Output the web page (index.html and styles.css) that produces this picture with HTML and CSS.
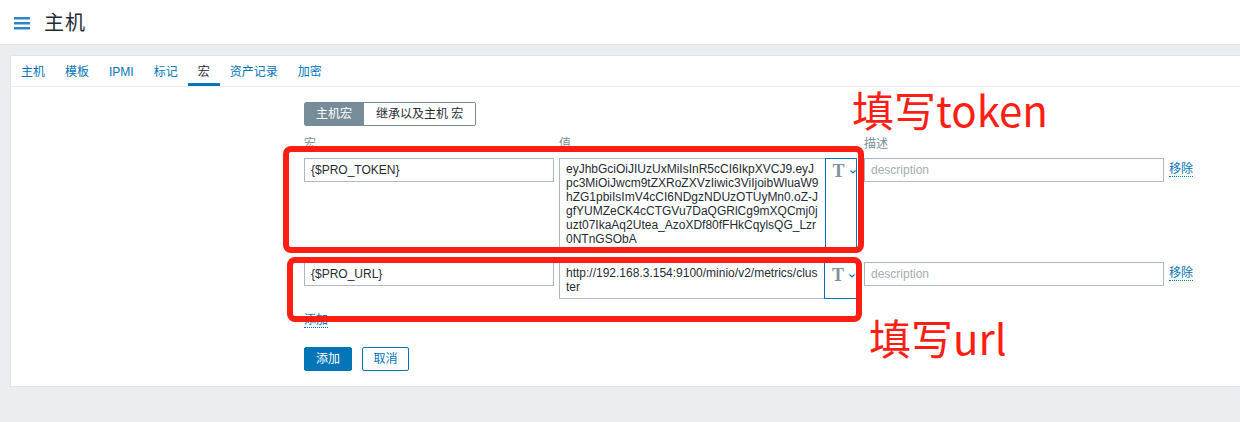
FILE: index.html
```html
<!DOCTYPE html>
<html lang="zh-CN">
<head>
<meta charset="utf-8">
<title>主机</title>
<link rel="stylesheet" href="styles.css">
</head>
<body>
<header class="page-header">
  <span class="menu-toggle" aria-label="菜单">
    <svg width="16" height="13" viewBox="0 0 16 13">
      <rect x="0" y="0" width="16" height="2.5" fill="#2d86c8"/>
      <rect x="0" y="5" width="16" height="2.5" fill="#2d86c8"/>
      <rect x="0" y="10" width="16" height="2.5" fill="#2d86c8"/>
    </svg>
  </span>
  <h1 class="page-title">主机</h1>
</header>

<main class="page">
  <section class="panel">
    <nav class="tabs">
      <a class="tab">主机</a>
      <a class="tab">模板</a>
      <a class="tab">IPMI</a>
      <a class="tab">标记</a>
      <a class="tab active">宏</a>
      <a class="tab">资产记录</a>
      <a class="tab">加密</a>
    </nav>

    <form class="macro-form">
      <div class="segmented">
        <span class="seg seg-on">主机宏</span><span class="seg">继承以及主机 宏</span>
      </div>

      <div class="macro-row head">
        <div class="col-label">宏</div>
        <div class="col-label">值</div>
        <div class="col-label">描述</div>
        <div></div>
      </div>

      <div class="macro-row">
        <div class="field macro-name">{$PRO_TOKEN}</div>
        <div class="value-group">
          <div class="value-text tall">
            <span>eyJhbGciOiJIUzUxMiIsInR5cCI6IkpXVCJ9.eyJ</span>
            <span>pc3MiOiJwcm9tZXRoZXVzIiwic3ViIjoibWluaW9</span>
            <span>hZG1pbiIsImV4cCI6NDgzNDUzOTUyMn0.oZ-J</span>
            <span>gfYUMZeCK4cCTGVu7DaQGRlCg9mXQCmj0j</span>
            <span>uzt07IkaAq2Utea_AzoXDf80fFHkCqylsQG_Lzr</span>
            <span>0NTnGSObA</span>
          </div>
          <span class="type-btn"><span class="type-t">T</span><svg class="chev" width="6" height="4" viewBox="0 0 6 4"><path d="M0.5 0.5 L3 3 L5.5 0.5" fill="none" stroke="#0275b8" stroke-width="1.1"/></svg></span>
        </div>
        <div class="field desc placeholder">description</div>
        <a class="remove">移除</a>
      </div>

      <div class="macro-row second">
        <div class="field macro-name">{$PRO_URL}</div>
        <div class="value-group">
          <div class="value-text short">
            <span>http://192.168.3.154:9100/minio/v2/metrics/clus</span>
            <span>ter</span>
          </div>
          <span class="type-btn"><span class="type-t">T</span><svg class="chev" width="6" height="4" viewBox="0 0 6 4"><path d="M0.5 0.5 L3 3 L5.5 0.5" fill="none" stroke="#0275b8" stroke-width="1.1"/></svg></span>
        </div>
        <div class="field desc placeholder">description</div>
        <a class="remove">移除</a>
      </div>

      <div class="add-row"><a class="link-add">添加</a></div>

      <div class="actions">
        <span class="btn btn-primary">添加</span>
        <span class="btn btn-alt">取消</span>
      </div>
    </form>
  </section>

  <!-- hand-drawn callouts over the form -->
  <div class="callout-box box-token"></div>
  <div class="callout-box box-url"></div>
  <div class="callout-note note-token">填写token</div>
  <div class="callout-note note-url">填写url</div>
</main>
</body>
</html>
```

FILE: styles.css
```css
* {
  box-sizing: border-box;
}

html, body {
  margin: 0;
  padding: 0;
}

body {
  width: 1240px;
  height: 422px;
  overflow: hidden;
  background: #ebeef0;
  font-family: "Liberation Sans", "Noto Sans CJK SC", sans-serif;
  font-size: 12px;
  color: #1f2c33;
  position: relative;
}

/* top bar */
.page-header {
  height: 45px;
  background: #fff;
  border-bottom: 1px solid #dfe4e7;
  display: flex;
  align-items: center;
  padding-left: 14px;
}

.menu-toggle {
  display: flex;
  width: 16px;
  height: 13px;
  margin-top: 2px;
}

.page-title {
  margin: 0 0 0 14px;
  font-family: "Noto Sans CJK SC", sans-serif;
  font-weight: normal;
  font-size: 20px;
  line-height: 24px;
  color: #1f2c33;
  letter-spacing: 1px;
}

/* content panel */
.page {
  padding-top: 10px;
}

.panel {
  margin-left: 10px;
  background: #fff;
  border: 1px solid #dfe4e7;
  border-right: none;
  padding-bottom: 15px;
}

.tabs {
  display: flex;
  height: 31px;
  border-bottom: 1px solid #ebeef0;
}

.tab {
  display: block;
  height: 30px;
  padding: 8px 10px 0;
  line-height: 16px;
  color: #0275b8;
  white-space: nowrap;
}

.tab.active {
  color: #1f2c33;
  border-bottom: 3px solid #0275b8;
}

/* macro form */
.macro-form {
  padding: 15px 0 0 293px;
}

.segmented {
  display: inline-flex;
  height: 24px;
  border: 1px solid #768d99;
  border-radius: 2px;
  overflow: hidden;
}

.seg {
  display: flex;
  align-items: center;
  padding: 0 12px;
  line-height: 22px;
  color: #1f2c33;
  background: #fff;
}

.seg-on {
  background: #768d99;
  color: #fff;
  padding: 0 12px 0 11px;
}

.macro-row {
  display: grid;
  grid-template-columns: 255px 305px 305px auto;
  align-items: start;
}

.macro-row.head {
  margin-top: 10px;
  margin-bottom: 6px;
}

.macro-row.second {
  margin-top: 12px;
}

.col-label {
  line-height: 16px;
  color: #768d99;
}

.field {
  height: 24px;
  border: 1px solid #acbbc2;
  padding: 0 6px;
  line-height: 22px;
  background: #fff;
  white-space: nowrap;
  overflow: hidden;
}

.macro-name {
  width: 250px;
}

.desc {
  width: 300px;
}

.placeholder {
  color: #a2adb3;
}

.value-group {
  display: flex;
  width: 298px;
}

.value-text {
  width: 266px;
  border: 1px solid #acbbc2;
  border-right: none;
  padding: 3px 6px 0;
  line-height: 14px;
  background: #fff;
}

.value-text span {
  display: block;
  white-space: nowrap;
}

.value-text.tall {
  height: 92px;
}

.value-text.short {
  height: 37px;
}

.type-btn {
  width: 33px;
  border: 1px solid #0275b8;
  display: flex;
  align-items: flex-start;
  padding: 3px 0 0 7px;
  background: #fff;
}

.type-t {
  font-family: "Liberation Serif", serif;
  font-weight: bold;
  font-size: 18px;
  line-height: 18px;
  color: #7d919c;
}

.chev {
  margin: 8px 0 0 5px;
}

.remove {
  margin-top: 4px;
  justify-self: start;
  line-height: 14px;
  color: #0275b8;
  border-bottom: 1px dotted #0275b8;
}

.add-row {
  margin-top: 14px;
  height: 16px;
}

.link-add {
  display: inline-block;
  line-height: 14px;
  color: #0275b8;
  border-bottom: 1px dotted #0275b8;
}

.actions {
  display: flex;
  gap: 10px;
  margin-top: 18px;
}

.btn {
  display: flex;
  align-items: center;
  justify-content: center;
  width: 48px;
  height: 24px;
  border-radius: 2px;
  border: 1px solid #0275b8;
  line-height: 22px;
}

.btn-primary {
  background: #0275b8;
  color: #fff;
}

.btn-alt {
  width: 47px;
  background: #fff;
  color: #0275b8;
}

/* red hand-drawn callouts */
.callout-box {
  position: absolute;
  border: 6px solid #fe1e14;
  border-radius: 8px;
}

.box-token {
  left: 283px;
  top: 146px;
  width: 581px;
  height: 107px;
}

.box-url {
  left: 287px;
  top: 257px;
  width: 575px;
  height: 65px;
}

.callout-note {
  position: absolute;
  font-family: "Noto Sans CJK SC", sans-serif;
  font-size: 42px;
  line-height: 42px;
  color: #fe1e14;
  white-space: nowrap;
}

.note-token {
  left: 852px;
  top: 88px;
}

.note-url {
  left: 869px;
  top: 316px;
}
```
